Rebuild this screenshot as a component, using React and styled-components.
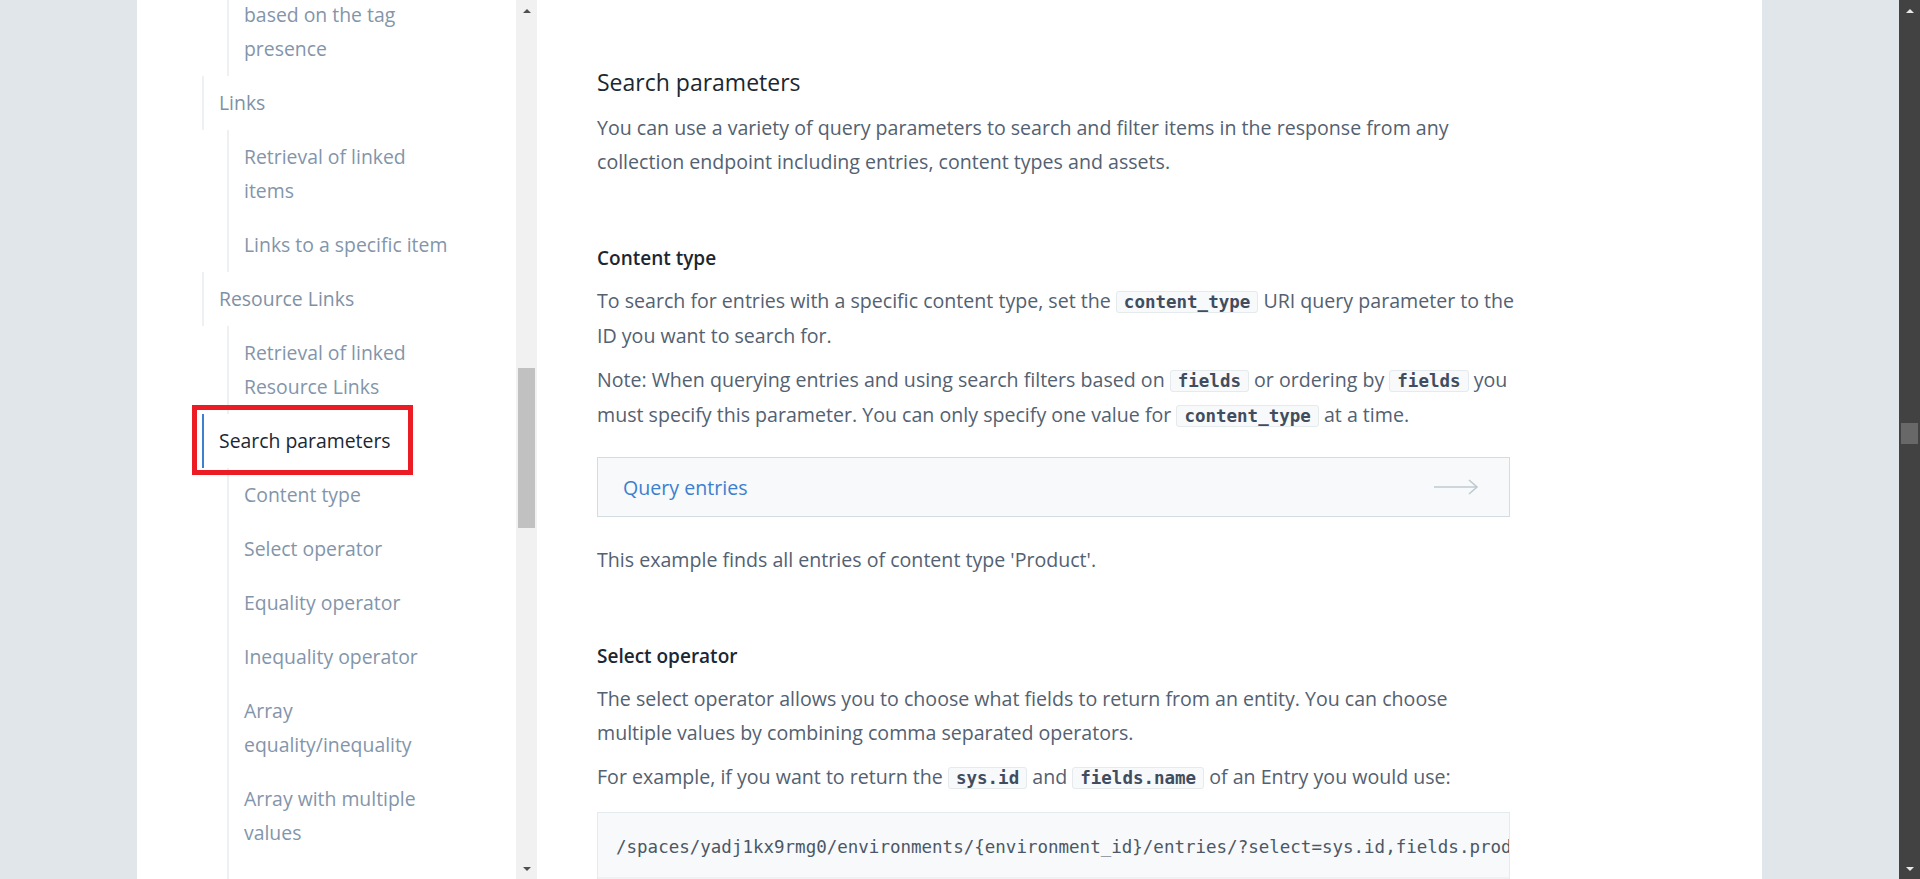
import React from 'react'
import styled, { createGlobalStyle } from 'styled-components'

const GlobalStyle = createGlobalStyle`
  * { box-sizing: border-box; }
  html, body { margin: 0; padding: 0; height: 100%; overflow: hidden; }
  body { font-family: 'Open Sans', Lato, sans-serif; color: #536171; }
  #root { height: 879px; }
`

const nav = [
  { sub: [['Retrieval of entries', 'based on the tag', 'presence']] },
  { title: 'Links', sub: ['Retrieval of linked items', 'Links to a specific item'] },
  { title: 'Resource Links', sub: ['Retrieval of linked Resource Links'] },
  {
    title: 'Search parameters',
    active: true,
    sub: [
      'Content type',
      'Select operator',
      'Equality operator',
      'Inequality operator',
      'Array equality/inequality',
      'Array with multiple values',
      'Inclusion',
      'Exclusion',
    ],
  },
]

const Scrollbar = ({ dark, thumbTop, thumbHeight }) => (
  <Rail $dark={dark}>
    <ArrowCell>
      <Arrow $dark={dark} />
    </ArrowCell>
    <Track>
      <Thumb $dark={dark} $top={thumbTop - 21} $height={thumbHeight} />
    </Track>
    <ArrowCell>
      <Arrow $dark={dark} $down />
    </ArrowCell>
  </Rail>
)

const LongArrow = () => (
  <svg width="46" height="16" viewBox="0 0 46 16" fill="none">
    <path d="M1 8h43M36 1l8 7-8 7" stroke="#bfcad1" strokeWidth="1.6" />
  </svg>
)

const App = () => (
  <Screen>
    <GlobalStyle />
    <Viewport>
      <Page>
        <Sidebar>
          <Nav>
            <NavList>
              {nav.map((group, i) => (
                <li key={i}>
                  {group.title && (
                    <TopLink $active={group.active}>
                      {group.title}
                      {group.active && <Highlight />}
                    </TopLink>
                  )}
                  <SubList>
                    {group.sub.map((item, j) => (
                      <SubItem key={j}>
                        {Array.isArray(item)
                          ? item.map((line, k) => (
                              <React.Fragment key={k}>
                                {k > 0 && <br />}
                                {line}
                              </React.Fragment>
                            ))
                          : item}
                      </SubItem>
                    ))}
                  </SubList>
                </li>
              ))}
            </NavList>
          </Nav>
          <Scrollbar thumbTop={368} thumbHeight={160} />
        </Sidebar>

        <Main>
          <H2>Search parameters</H2>
          <P>
            You can use a variety of query parameters to search and filter items in the response
            from any
            <br />
            collection endpoint including entries, content types and assets.
          </P>

          <Section>
            <H3>Content type</H3>
            <P>
              To search for entries with a specific content type, set the <Code>content_type</Code>{' '}
              URI query parameter to the
              <br />
              ID you want to search for.
            </P>
            <P $gap={10}>
              Note: When querying entries and using search filters based on <Code>fields</Code> or
              ordering by <Code>fields</Code> you
              <br />
              must specify this parameter. You can only specify one value for{' '}
              <Code>content_type</Code> at a time.
            </P>
            <ExampleBox>
              <ExampleLink>Query entries</ExampleLink>
              <LongArrow />
            </ExampleBox>
            <P $gap={26}>This example finds all entries of content type 'Product'.</P>
          </Section>

          <Section>
            <H3>Select operator</H3>
            <P>
              The select operator allows you to choose what fields to return from an entity. You can
              choose
              <br />
              multiple values by combining comma separated operators.
            </P>
            <P $gap={10}>
              For example, if you want to return the <Code>sys.id</Code> and{' '}
              <Code>fields.name</Code> of an Entry you would use:
            </P>
            <CodeBlock>
              <Pre>
                /spaces/yadj1kx9rmg0/environments/{'{environment_id}'}/entries/?select=sys.id,fields.productName&content_type=2PqfXUJwE8qSYKuM0U6w8M
              </Pre>
              <HScroll>
                <HThumb />
              </HScroll>
            </CodeBlock>
          </Section>
        </Main>
      </Page>
    </Viewport>
    <Scrollbar dark thumbTop={423} thumbHeight={21} />
  </Screen>
)

const Screen = styled.div`
  display: flex;
  height: 879px;
  overflow: hidden;
`

const Viewport = styled.div`
  flex: 1;
  display: flex;
  justify-content: center;
  background: #e1e6ea;
  overflow: hidden;
`

const Page = styled.div`
  width: 1625px;
  flex-shrink: 0;
  display: flex;
  background: #fff;
  height: 100%;
`

const Sidebar = styled.aside`
  width: 400px;
  flex-shrink: 0;
  display: flex;
  height: 100%;
`

const Nav = styled.nav`
  flex: 1;
  height: 100%;
  overflow: hidden;
  padding: 0 66px 0 65px;
`

const NavList = styled.ul`
  list-style: none;
  margin: -46px 0 0;
  padding: 0;
`

const TopLink = styled.div`
  position: relative;
  padding: 10px 0 10px 15px;
  border-left: 2px solid ${(p) => (p.$active ? '#3c80cf' : '#edf1f4')};
  font-size: 19.4px;
  line-height: 34px;
  font-weight: ${(p) => (p.$active ? 500 : 400)};
  color: ${(p) => (p.$active ? '#1b2733' : '#8091a5')};
`

const Highlight = styled.span`
  position: absolute;
  top: -9px;
  left: -12px;
  width: 221px;
  height: 70px;
  border: 5px solid #ec1c24;
  pointer-events: none;
`

const SubList = styled.ul`
  list-style: none;
  margin: 0 0 0 25px;
  padding: 0;
  border-left: 2px solid #edf1f4;
`

const SubItem = styled.li`
  padding: 10px 0 10px 15px;
  font-size: 19.4px;
  line-height: 34px;
  color: #8395aa;
`

const Rail = styled.div`
  width: 21px;
  flex-shrink: 0;
  height: 100%;
  display: flex;
  flex-direction: column;
  background: ${(p) => (p.$dark ? '#424242' : '#f1f1f1')};
`

const ArrowCell = styled.div`
  height: 21px;
  display: flex;
  align-items: center;
  justify-content: center;
`

const Arrow = styled.span`
  width: 0;
  height: 0;
  border-left: 4px solid transparent;
  border-right: 4px solid transparent;
  ${(p) => (p.$down ? 'border-top' : 'border-bottom')}: 4px solid
    ${(p) => (p.$dark ? '#e8e8e8' : '#505050')};
`

const Track = styled.div`
  flex: 1;
  display: flex;
  flex-direction: column;
  align-items: center;
`

const Thumb = styled.div`
  width: 17px;
  margin-top: ${(p) => p.$top}px;
  height: ${(p) => p.$height}px;
  background: ${(p) => (p.$dark ? '#686868' : '#c1c1c1')};
`

const Main = styled.main`
  width: 1010px;
  flex-shrink: 0;
  padding: 65px 0 0 60px;
`

const H2 = styled.h2`
  margin: 0;
  font-size: 23px;
  line-height: 35px;
  font-weight: 500;
  color: #1b2733;
`

const Section = styled.section`
  padding-top: 64px;
`

const H3 = styled.h3`
  margin: 0;
  font-size: 19px;
  line-height: 30px;
  font-weight: 600;
  color: #1b2733;
`

const P = styled.p`
  margin: ${(p) => p.$gap || 11}px 0 0;
  font-size: 19.6px;
  line-height: 34px;
  color: #536171;
`

const Code = styled.code`
  font-family: 'DejaVu Sans Mono', 'Liberation Mono', monospace;
  font-weight: 700;
  font-size: 17.5px;
  color: #414d5e;
  background: #f7f9fa;
  border: 1px solid #e5ebed;
  border-radius: 3px;
  padding: 0 7px;
`

const ExampleBox = styled.div`
  width: 913px;
  margin-top: 24px;
  height: 60px;
  display: flex;
  align-items: center;
  justify-content: space-between;
  padding: 0 30px 0 25px;
  background: #f7f9fa;
  border: 1px solid #d3dce0;
`

const ExampleLink = styled.span`
  font-size: 19.6px;
  font-weight: 500;
  color: #3c80cf;
`

const CodeBlock = styled.div`
  width: 913px;
  margin-top: 17px;
  background: #f7f9fa;
  border: 1px solid #e5ebed;
  overflow: hidden;
`

const Pre = styled.pre`
  margin: 0;
  padding: 22px 18px 18px;
  white-space: pre;
  font-family: 'DejaVu Sans Mono', 'Liberation Mono', monospace;
  font-size: 17.5px;
  line-height: 24px;
  color: #4b5766;
`

const HScroll = styled.div`
  height: 17px;
  background: #f1f1f1;
  padding: 2px 0 0 21px;
`

const HThumb = styled.div`
  width: 572px;
  height: 13px;
  background: #c1c1c1;
`

export default App
